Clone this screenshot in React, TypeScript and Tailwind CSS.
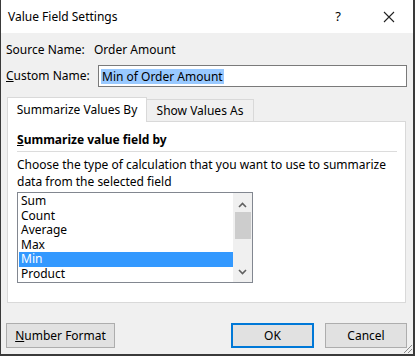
import React from "react";

const font = { fontFamily: '"Noto Sans", "Open Sans", sans-serif' };

export default function App() {
  const items = ["Sum", "Count", "Average", "Max", "Min", "Product"];
  return (
    <div
      className="relative w-[415px] h-[356px] bg-[#f0f0f0] border-l border-r-2 border-b-2 border-[#3a3a3a] text-[12px] text-black overflow-hidden"
      style={font}
    >
      {/* Title bar */}
      <div className="h-[33px] bg-white flex items-center pl-[7px]">
        <span className="text-[12px] flex-1">Value Field Settings</span>
        <span className="w-[20px] text-center mr-[35px] text-[13px]">?</span>
        <svg width="12" height="12" viewBox="0 0 12 12" className="mr-[18px]">
          <path d="M1 1 L11 11 M11 1 L1 11" stroke="#222" strokeWidth="1.1" />
        </svg>
      </div>

      {/* Body */}
      <div className="pl-[5px] pr-[6px]">
        <div className="flex items-center h-[16px] mt-[9px]">
          <span className="w-[88px]">Source Name:</span>
          <span>Order Amount</span>
        </div>
        <div className="flex items-center mt-[7px]">
          <span className="w-[92px]">
            <span className="underline">C</span>ustom Name:
          </span>
          <div className="w-[309px] h-[22px] bg-white border border-[#7a7a7a] flex items-center pl-[2px]">
            <span className="bg-[#99c9ff] leading-[15px] px-[1px]">Min of Order Amount</span>
          </div>
        </div>

        {/* Tabs */}
        <div className="flex items-end mt-[10px] ml-[1px]">
          <div className="w-[140px] h-[25px] bg-white border border-b-0 border-[#d9d9d9] flex items-center justify-center relative z-10 -mb-px">
            Summarize Values By
          </div>
          <div className="w-[107px] h-[22px] bg-[#f0f0f0] border border-l-0 border-b-0 border-[#d9d9d9] flex items-center justify-center">
            Show Values As
          </div>
        </div>
        <div className="ml-[1px] w-[399px] h-[182px] bg-white border border-[#d9d9d9] px-[9px]">
          <div className="font-bold mt-[10px] leading-[16px]">
            <span className="underline">S</span>ummarize value field by
          </div>
          <div className="h-px bg-[#dcdcdc] mt-[3px] w-[380px]" />
          <div className="mt-[4px] leading-[17px]">
            Choose the type of calculation that you want to use to summarize
            <br />
            data from the selected field
          </div>
          <div className="mt-[2px] w-[236px] h-[91px] border border-[#828790] flex">
            <div className="flex-1 pt-[1px] pl-[1px]">
              {items.map((it) => (
                <div
                  key={it}
                  className={
                    "h-[14.5px] leading-[14.5px] pl-[2px] " +
                    (it === "Min" ? "bg-[#3399ff] text-white" : "")
                  }
                >
                  {it}
                </div>
              ))}
            </div>
            <div className="w-[19px] bg-[#f0f0f0] flex flex-col items-center">
              <svg width="9" height="6" viewBox="0 0 9 6" className="mt-[9px]">
                <path d="M1 5 L4.5 1.5 L8 5" stroke="#606060" strokeWidth="1.6" fill="none" />
              </svg>
              <div className="w-[16px] h-[27px] bg-[#cdcdcd] mt-[4px]" />
              <div className="flex-1" />
              <svg width="9" height="6" viewBox="0 0 9 6" className="mb-[7px]">
                <path d="M1 1 L4.5 4.5 L8 1" stroke="#606060" strokeWidth="1.6" fill="none" />
              </svg>
            </div>
          </div>
        </div>

        {/* Buttons */}
        <div className="flex mt-[20px]">
          <button className="w-[109px] h-[25px] bg-[#e1e1e1] border border-[#adadad]">
            <span className="underline">N</span>umber Format
          </button>
          <div className="flex-1" />
          <button className="w-[83px] h-[25px] bg-[#e1e1e1] border-2 border-[#0078d7] mr-[11px]">
            OK
          </button>
          <button className="w-[82px] h-[25px] bg-[#e1e1e1] border border-[#adadad]">
            Cancel
          </button>
        </div>
      </div>

      {/* Resize grip */}
      <svg width="12" height="12" viewBox="0 0 12 12" className="absolute right-0 bottom-0">
        <path d="M11 3 L3 11 M11 7 L7 11" stroke="#8a8a8a" strokeWidth="1" />
      </svg>
    </div>
  );
}
